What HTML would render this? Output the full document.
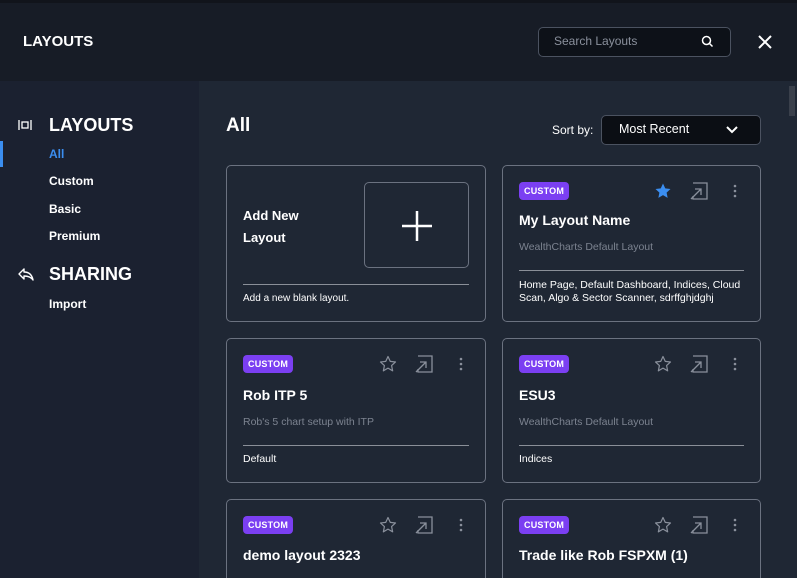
<!DOCTYPE html>
<html><head><meta charset="utf-8"><style>
*{margin:0;padding:0;box-sizing:border-box}
html,body{width:797px;height:578px;overflow:hidden}
body{background:#1f2734;font-family:"Liberation Sans",Arial,sans-serif;color:#fff;position:relative}
.abs{position:absolute}
.top{left:0;top:0;width:797px;height:81px;background:#171c26}
.strip{left:0;top:0;width:797px;height:3px;background:#11141b}
.side{left:0;top:81px;width:199px;height:497px;background:#1b2130}
.b{font-weight:bold}
.card{position:absolute;border:1px solid #6b7280;border-radius:5px;background:#1f2734}
.badge{position:absolute;left:16px;background:#7b3ff2;color:#fff;font-size:9px;font-weight:bold;border-radius:4px;height:18px;line-height:18px;padding:0 5px;letter-spacing:.2px}
.title{position:absolute;left:16px;font-size:14px;font-weight:bold}
.sub{position:absolute;left:16px;font-size:10.5px;color:#7c8390}
.hr{position:absolute;left:16px;right:16px;height:1px;background:#8a8f98}
.foot{position:absolute;left:16px;font-size:10.5px;color:#fff;line-height:13px}
.ic{position:absolute}
</style></head><body>
<div class="abs top"></div><div class="abs strip"></div>
<div class="abs b" style="left:23px;top:33px;font-size:15px">LAYOUTS</div>
<div class="abs" style="left:538px;top:27px;width:193px;height:30px;border:1px solid #4b5260;border-radius:5px;background:#0d1118"></div>
<div class="abs" style="left:554px;top:34px;font-size:12px;color:#8a909c">Search Layouts</div>
<svg class="abs" style="left:701px;top:35px" width="13" height="13" viewBox="0 0 13 13"><circle cx="5.5" cy="5.5" r="4" fill="none" stroke="#fff" stroke-width="1.5"/><path d="M8.5 8.5L11.5 11.5" stroke="#fff" stroke-width="1.5"/></svg>
<svg class="abs" style="left:758px;top:35px" width="14" height="14" viewBox="0 0 14 14"><path d="M1 1L13 13M13 1L1 13" stroke="#fff" stroke-width="2"/></svg>
<div class="abs side"></div>
<div class="abs" style="left:0;top:141px;width:3px;height:26px;background:#3b8ef0"></div>
<svg class="abs" style="left:18px;top:119px" width="14" height="12" viewBox="0 0 14 12"><path d="M1 1V11M13 1V11" stroke="#fff" stroke-width="1.3"/><rect x="4" y="3" width="6" height="6" fill="none" stroke="#fff" stroke-width="1.3"/></svg>
<div class="abs b" style="left:49px;top:115px;font-size:18px">LAYOUTS</div>
<div class="abs b" style="left:49px;top:147px;font-size:12px;color:#3b8ef0">All</div>
<div class="abs b" style="left:49px;top:174px;font-size:12px">Custom</div>
<div class="abs b" style="left:49px;top:202px;font-size:12px">Basic</div>
<div class="abs b" style="left:49px;top:229px;font-size:12px">Premium</div>
<svg class="abs" style="left:17px;top:267px" width="17" height="14" viewBox="0 0 17 14"><path d="M7 2L2 7L7 12V9C11 9 14 10 16 13C15 8 12 5 7 5Z" fill="none" stroke="#fff" stroke-width="1.4" stroke-linejoin="round"/></svg>
<div class="abs b" style="left:49px;top:264px;font-size:18px">SHARING</div>
<div class="abs b" style="left:49px;top:297px;font-size:12px">Import</div>
<div class="abs b" style="left:226px;top:115px;font-size:19px">All</div>
<div class="abs" style="left:552px;top:123px;font-size:12px">Sort by:</div>
<div class="abs" style="left:601px;top:115px;width:160px;height:30px;border:1px solid #4b5260;border-radius:5px;background:#0b0e14"></div>
<div class="abs" style="left:619px;top:122px;font-size:12.5px">Most Recent</div>
<svg class="abs" style="left:726px;top:126px" width="12" height="8" viewBox="0 0 12 8"><path d="M1 1L6 6L11 1" fill="none" stroke="#fff" stroke-width="2"/></svg>
<div class="abs" style="left:789px;top:86px;width:6px;height:30px;background:#3a404b"></div>

<div class="card" style="left:226px;top:165px;width:260px;height:157px">
 <div class="abs b" style="left:16px;top:39px;font-size:13px;line-height:22px">Add New<br>Layout</div>
 <div class="abs" style="left:137px;top:16px;width:105px;height:86px;border:1px solid #6b7280;border-radius:5px"></div>
 <svg class="abs" style="left:174px;top:44px" width="32" height="32" viewBox="0 0 32 32"><path d="M16 1V31M1 16H31" stroke="#fff" stroke-width="2.5"/></svg>
 <div class="hr" style="top:118px"></div>
 <div class="foot" style="top:126px;font-size:10px">Add a new blank layout.</div>
</div>

<div class="card" style="left:502px;top:165px;width:259px;height:157px">
 <div class="badge" style="top:16px">CUSTOM</div>
 <svg class="ic" style="left:151px;top:16px" width="18" height="18" viewBox="0 0 24 24"><path d="M12 2l3 6.5 7 .8-5.2 4.8 1.4 7-6.2-3.6-6.2 3.6 1.4-7L2 9.3l7-.8z" fill="#3b8ef0"/></svg>
 <svg class="ic" style="left:187px;top:16px" width="18" height="18" viewBox="0 0 18 18"><path d="M3 1H17V17H3V14M1 17L11 7M5 7H11V13" fill="none" stroke="#8a909c" stroke-width="1.3"/></svg>
 <svg class="ic" style="left:230px;top:17px" width="4" height="16" viewBox="0 0 4 16"><circle cx="2" cy="3" r="1.3" fill="#8a909c"/><circle cx="2" cy="8" r="1.3" fill="#8a909c"/><circle cx="2" cy="13" r="1.3" fill="#8a909c"/></svg>
 <div class="title" style="top:46px">My Layout Name</div>
 <div class="sub" style="top:75px">WealthCharts Default Layout</div>
 <div class="hr" style="top:104px"></div>
 <div class="foot" style="top:113px">Home Page, Default Dashboard, Indices, Cloud Scan, Algo &amp; Sector Scanner, sdrffghjdghj</div>
</div>

<div class="card" style="left:226px;top:338px;width:260px;height:145px">
 <div class="badge" style="top:16px">CUSTOM</div>
 <svg class="ic" style="left:152px;top:16px" width="18" height="18" viewBox="0 0 24 24"><path d="M12 2l3 6.5 7 .8-5.2 4.8 1.4 7-6.2-3.6-6.2 3.6 1.4-7L2 9.3l7-.8z" fill="none" stroke="#8a909c" stroke-width="1.6" stroke-linejoin="round"/></svg>
 <svg class="ic" style="left:188px;top:16px" width="18" height="18" viewBox="0 0 18 18"><path d="M3 1H17V17H3V14M1 17L11 7M5 7H11V13" fill="none" stroke="#8a909c" stroke-width="1.3"/></svg>
 <svg class="ic" style="left:232px;top:17px" width="4" height="16" viewBox="0 0 4 16"><circle cx="2" cy="3" r="1.3" fill="#8a909c"/><circle cx="2" cy="8" r="1.3" fill="#8a909c"/><circle cx="2" cy="13" r="1.3" fill="#8a909c"/></svg>
 <div class="title" style="top:48px">Rob ITP 5</div>
 <div class="sub" style="top:77px">Rob's 5 chart setup with ITP</div>
 <div class="hr" style="top:106px"></div>
 <div class="foot" style="top:114px">Default</div>
</div>

<div class="card" style="left:502px;top:338px;width:259px;height:145px">
 <div class="badge" style="top:16px">CUSTOM</div>
 <svg class="ic" style="left:151px;top:16px" width="18" height="18" viewBox="0 0 24 24"><path d="M12 2l3 6.5 7 .8-5.2 4.8 1.4 7-6.2-3.6-6.2 3.6 1.4-7L2 9.3l7-.8z" fill="none" stroke="#8a909c" stroke-width="1.6" stroke-linejoin="round"/></svg>
 <svg class="ic" style="left:187px;top:16px" width="18" height="18" viewBox="0 0 18 18"><path d="M3 1H17V17H3V14M1 17L11 7M5 7H11V13" fill="none" stroke="#8a909c" stroke-width="1.3"/></svg>
 <svg class="ic" style="left:230px;top:17px" width="4" height="16" viewBox="0 0 4 16"><circle cx="2" cy="3" r="1.3" fill="#8a909c"/><circle cx="2" cy="8" r="1.3" fill="#8a909c"/><circle cx="2" cy="13" r="1.3" fill="#8a909c"/></svg>
 <div class="title" style="top:48px">ESU3</div>
 <div class="sub" style="top:77px">WealthCharts Default Layout</div>
 <div class="hr" style="top:106px"></div>
 <div class="foot" style="top:114px">Indices</div>
</div>

<div class="card" style="left:226px;top:499px;width:260px;height:100px">
 <div class="badge" style="top:16px">CUSTOM</div>
 <svg class="ic" style="left:152px;top:16px" width="18" height="18" viewBox="0 0 24 24"><path d="M12 2l3 6.5 7 .8-5.2 4.8 1.4 7-6.2-3.6-6.2 3.6 1.4-7L2 9.3l7-.8z" fill="none" stroke="#8a909c" stroke-width="1.6" stroke-linejoin="round"/></svg>
 <svg class="ic" style="left:188px;top:16px" width="18" height="18" viewBox="0 0 18 18"><path d="M3 1H17V17H3V14M1 17L11 7M5 7H11V13" fill="none" stroke="#8a909c" stroke-width="1.3"/></svg>
 <svg class="ic" style="left:232px;top:17px" width="4" height="16" viewBox="0 0 4 16"><circle cx="2" cy="3" r="1.3" fill="#8a909c"/><circle cx="2" cy="8" r="1.3" fill="#8a909c"/><circle cx="2" cy="13" r="1.3" fill="#8a909c"/></svg>
 <div class="title" style="top:47px">demo layout 2323</div>
</div>

<div class="card" style="left:502px;top:499px;width:259px;height:100px">
 <div class="badge" style="top:16px">CUSTOM</div>
 <svg class="ic" style="left:151px;top:16px" width="18" height="18" viewBox="0 0 24 24"><path d="M12 2l3 6.5 7 .8-5.2 4.8 1.4 7-6.2-3.6-6.2 3.6 1.4-7L2 9.3l7-.8z" fill="none" stroke="#8a909c" stroke-width="1.6" stroke-linejoin="round"/></svg>
 <svg class="ic" style="left:187px;top:16px" width="18" height="18" viewBox="0 0 18 18"><path d="M3 1H17V17H3V14M1 17L11 7M5 7H11V13" fill="none" stroke="#8a909c" stroke-width="1.3"/></svg>
 <svg class="ic" style="left:230px;top:17px" width="4" height="16" viewBox="0 0 4 16"><circle cx="2" cy="3" r="1.3" fill="#8a909c"/><circle cx="2" cy="8" r="1.3" fill="#8a909c"/><circle cx="2" cy="13" r="1.3" fill="#8a909c"/></svg>
 <div class="title" style="top:47px">Trade like Rob FSPXM (1)</div>
</div>
</body></html>
